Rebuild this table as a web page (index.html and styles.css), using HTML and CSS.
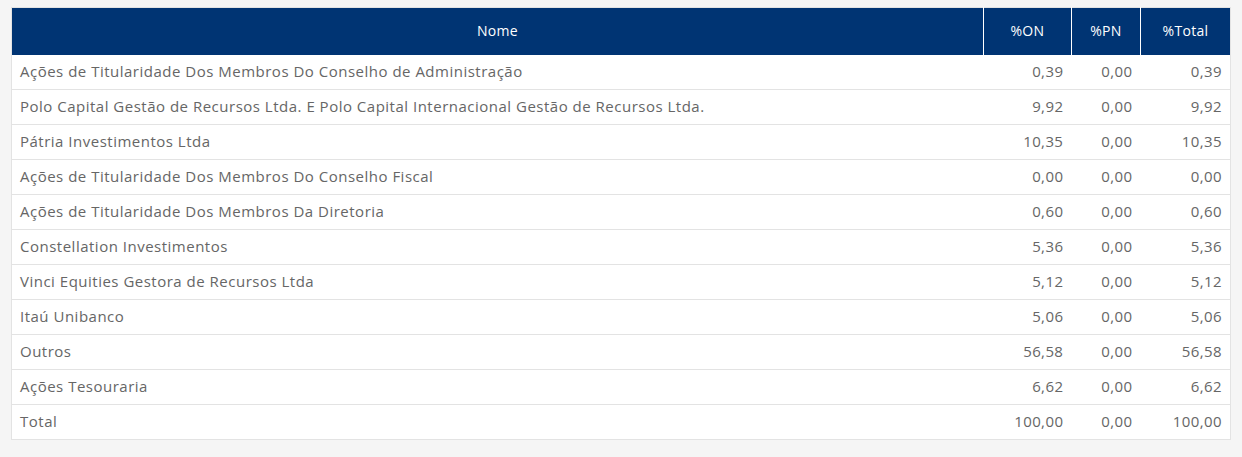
FILE: index.html
```html
<!DOCTYPE html>
<html lang="pt-BR">
<head>
<meta charset="utf-8">
<link rel="stylesheet" href="styles.css">
</head>
<body>
<div class="wrap">
<table class="grid">
<colgroup><col class="c-nome"><col class="c-on"><col class="c-pn"><col class="c-tot"></colgroup>
<thead>
<tr><th>Nome</th><th>%ON</th><th>%PN</th><th>%Total</th></tr>
</thead>
<tbody>
<tr><td>Ações de Titularidade Dos Membros Do Conselho de Administração</td><td class="n">0,39</td><td class="n">0,00</td><td class="n">0,39</td></tr>
<tr><td>Polo Capital Gestão de Recursos Ltda. E Polo Capital Internacional Gestão de Recursos Ltda.</td><td class="n">9,92</td><td class="n">0,00</td><td class="n">9,92</td></tr>
<tr><td>Pátria Investimentos Ltda</td><td class="n">10,35</td><td class="n">0,00</td><td class="n">10,35</td></tr>
<tr><td>Ações de Titularidade Dos Membros Do Conselho Fiscal</td><td class="n">0,00</td><td class="n">0,00</td><td class="n">0,00</td></tr>
<tr><td>Ações de Titularidade Dos Membros Da Diretoria</td><td class="n">0,60</td><td class="n">0,00</td><td class="n">0,60</td></tr>
<tr><td>Constellation Investimentos</td><td class="n">5,36</td><td class="n">0,00</td><td class="n">5,36</td></tr>
<tr><td>Vinci Equities Gestora de Recursos Ltda</td><td class="n">5,12</td><td class="n">0,00</td><td class="n">5,12</td></tr>
<tr><td>Itaú Unibanco</td><td class="n">5,06</td><td class="n">0,00</td><td class="n">5,06</td></tr>
<tr><td>Outros</td><td class="n">56,58</td><td class="n">0,00</td><td class="n">56,58</td></tr>
<tr><td>Ações Tesouraria</td><td class="n">6,62</td><td class="n">0,00</td><td class="n">6,62</td></tr>
<tr><td>Total</td><td class="n">100,00</td><td class="n">0,00</td><td class="n">100,00</td></tr>
</tbody>
</table>
</div>
</body>
</html>
```
FILE: styles.css
```css
html, body {
  margin: 0;
  background: #f5f5f5;
}
body {
  font-family: "Open Sans", "Liberation Sans", sans-serif;
}
.wrap {
  padding: 7px 11px 0 11px;
}
.grid {
  width: 1220px;
  border-collapse: collapse;
  table-layout: fixed;
  background: #fff;
  border: 1px solid #e3e3e3;
}
.c-nome { width: 971px; }
.c-on { width: 88px; }
.c-pn { width: 69px; }
.c-tot { width: 90px; }
.grid th {
  background: #003473;
  color: #fff;
  font-weight: 400;
  font-size: 14px;
  letter-spacing: 0.3px;
  height: 47px;
  padding: 0 0 2px 0;
  box-sizing: border-box;
  text-align: center;
  border-left: 1px solid #fff;
}
.grid th:first-child { border-left: none; }
.grid td {
  height: 32px;
  padding: 0 8px 2px 8px;
  font-size: 15px;
  letter-spacing: 0.5px;
  color: #666;
  border-top: 1px solid #e3e3e3;
  white-space: nowrap;
}
.grid tbody tr:first-child td { border-top: none; }
.grid td.n {
  text-align: right;
  padding-right: 8px;
  letter-spacing: 0.4px;
}
```
